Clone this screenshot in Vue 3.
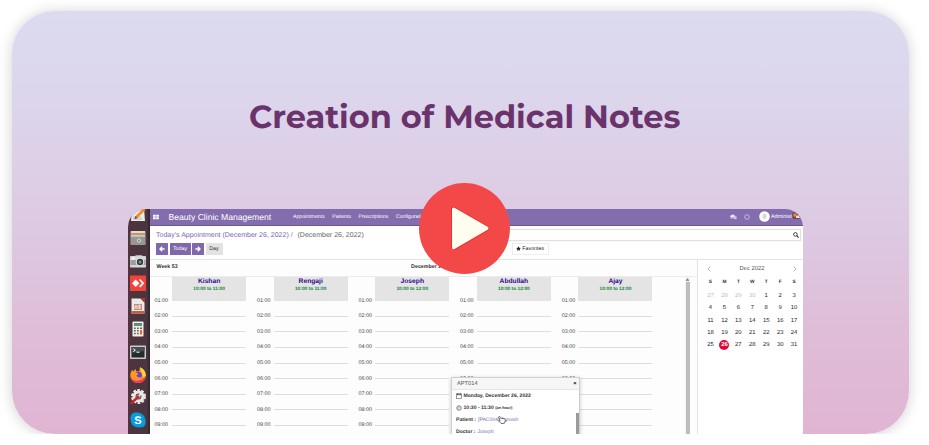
<script setup>
const menus = ['Appointments', 'Patients', 'Prescriptions', 'Configuration']
const doctors = [
  { name: 'Kishan', hours: '10:00 to 11:00' },
  { name: 'Rengaji', hours: '10:00 to 11:00' },
  { name: 'Joseph', hours: '10:00 to 12:00' },
  { name: 'Abdullah', hours: '10:00 to 12:00' },
  { name: 'Ajay', hours: '10:00 to 12:00' },
]
const slots = ['01:00', '02:00', '03:00', '04:00', '05:00', '06:00', '07:00', '08:00', '09:00']
const weekdays = ['S', 'M', 'T', 'W', 'T', 'F', 'S']
const days = [27, 28, 29, 30, ...Array.from({ length: 31 }, (_, i) => i + 1)].map((n, i) => ({
  n,
  muted: i < 4,
  today: i >= 4 && n === 26,
}))
// The appointment popup lies over the last two columns' labels from 07:00 on.
const labelShown = (column, slot) => column < 3 || slot < 6
</script>

<template>
  <main class="card">
    <h1 class="title">Creation of Medical Notes</h1>

    <section class="screen">
      <aside class="dock">
        <svg viewBox="0 0 16 16"><path d="M2 1h12l1 13H1z" fill="#ecebea" /><path d="M3 10h8M3 12h9" stroke="#bbb" /><path d="M13.5 1l2 2-8 8-3 1 1-3z" fill="#f08a2c" /><path d="M5.5 9l2 2-3 1z" fill="#554" /></svg>
        <svg viewBox="0 0 16 16"><rect x="0.5" y="1" width="15" height="14" rx="1" fill="#aaa9a5" /><rect x="1" y="1" width="14" height="2" fill="#dedbd5" /><rect x="1" y="3" width="14" height="1.500" fill="#d98d54" /><rect x="1" y="6" width="14" height="9" fill="#989792" /><path d="M1 6h14" stroke="#e6e6e1" /><circle cx="9" cy="10.500" r="2" fill="#d9d9d5" /><circle cx="9" cy="10.500" r="1" fill="#777" /></svg>
        <svg viewBox="0 0 16 16"><path d="M5 3l1-1h6l1 2z" fill="#aaa" /><rect x="0" y="3" width="16" height="11.500" rx="1" fill="#d5d7d5" /><rect x="0.3" y="7" width="15.4" height="5" fill="#9b9f9f" /><rect x="2" y="4.5" width="3" height="2" fill="#f8f8f8" /><circle cx="10" cy="9" r="4.3" fill="#e7e7e3" /><circle cx="10" cy="9" r="3.2" fill="#353b40" /><circle cx="10" cy="9" r="1.5" fill="#799098" /></svg>
        <svg viewBox="0 0 16 16"><rect x="0" y="0.5" width="16" height="15.5" rx="0.8" fill="#f44439" /><path d="M5.7 4.5L9.4 8.2l-3.7 3.7L2 8.2z" fill="#fff" /><path d="M9 5l1.2-1.1 4.1 4.3-4.1 4.2L9 11.3l3-3.1z" fill="#fff" /></svg>
        <svg viewBox="0 0 16 16"><path d="M1.5 0.5h9l4 4v11h-13z" fill="#eceae8" /><path d="M10 0h5v5z" fill="#a43f21" /><path d="M1.5 13h13v2.5h-13z" fill="#c65b3d" /><rect x="4" y="6" width="8" height="6" fill="#c78e78" /><path d="M5 11V8h2v3M9 11V7h1v4" stroke="#fff" stroke-width="0.8" fill="none" /></svg>
        <svg viewBox="0 0 16 16"><rect x="2.5" y="0.5" width="11" height="15" rx="0.8" fill="#eeeeea" /><rect x="4" y="2" width="8" height="3" fill="#569275" /><path d="M4 7.2h1.7M7 7.2h1.7M10 7.2h2M4 9.8h1.7M7 9.8h1.7M4 12.5h1.7M7 12.5h1.7" stroke="#5d6265" stroke-width="1.5" /><rect x="10" y="9" width="2" height="4.5" fill="#ed6524" /></svg>
        <svg viewBox="0 0 16 16"><rect x="0" y="1.5" width="16" height="13.5" rx="0.8" fill="#c9cac7" /><rect x="1.5" y="3" width="13" height="10.5" fill="#252b2d" /><path d="M1.5 3h13v4l-13 2z" fill="#454e50" /><path d="M3.3 4.8l2 1.4-2 1.4M6.5 8.2h3" stroke="#fff" stroke-width="1" fill="none" /></svg>
        <svg viewBox="0 0 16 16"><path d="M10 0.3C13.8 2 16 5 15.8 9c-.3 4-3.5 7-7.6 7S0.5 13 .3 8.7C.2 5.8 1.4 4 2.5 2.7l.6 1.7L5.7 2l.5 2.2 3 .2z" fill="#ff9926" /><path d="M.4 9C2 13 5 14 8.6 13.6 12 13.2 14.2 10.8 15.7 9c0 4-3.2 7-7.5 7S.8 12.8.4 9z" fill="#f1365e" /><path d="M10 0.3C13.8 2 16 5 15.7 9L13 10 11.6 5z" fill="#ffda35" /><circle cx="8.3" cy="8.5" r="3.7" fill="#703fc2" /><path d="M2.5 6c3-1 5 0 6 1l-2 1.3C7.2 11 10 11 11.6 9.4 11 13 5 14 3.5 9z" fill="#ff9926" /></svg>
        <svg viewBox="0 0 16 16"><circle cx="8.5" cy="7.5" r="6.3" fill="none" stroke="#e8e8e5" stroke-width="2.4" stroke-dasharray="2.6 1.36" /><circle cx="8.5" cy="7.5" r="4.5" fill="none" stroke="#e8e8e5" stroke-width="3.2" /><circle cx="8.5" cy="7.5" r="2.3" fill="#98928f" /><path d="M1.5 14.2L9 7" stroke="#c9252c" stroke-width="2.5" stroke-linecap="round" /><path d="M9 7.4l2.3-3.7" stroke="#f2f2f2" stroke-width="1.7" /></svg>
        <svg viewBox="0 0 16 16"><path d="M5 .6C10 0 15 2.5 15.3 8c1 4-1 8-5 7.3C5 16 .8 13 .8 8-.2 4 1.8 1 5 .6z" fill="#079ddd" /><text x="8" y="12" text-anchor="middle" class="skype">S</text></svg>
      </aside>

      <div class="app">
        <header class="topbar">
          <svg class="apps" viewBox="0 0 6 6"><path d="M0 .8h2.7v2H0zM3.2.8h2.7v2H3.2zM0 3.2h2.7v2H0zM3.2 3.2h2.7v2H3.2z" fill="#fff" /></svg>
          <span class="brand">Beauty Clinic Management</span>
          <nav class="menu"><span v-for="m in menus" :key="m">{{ m }}</span></nav>
          <div class="tray">
            <svg class="chat" viewBox="0 0 7 6"><ellipse cx="2.7" cy="2.3" rx="2.5" ry="1.8" fill="#e5def0" /><path d="M1 3.2L.5 5l2-1z" fill="#e5def0" /><path d="M5.4 2c2 .7 1.6 2.2.7 2.6l.4 1-1.6-.7c-1 .1-1.6-.1-2-.5 1.600 0 2.800-.8 2.500-2.400z" fill="#d9cfe8" /></svg>
            <svg class="clock" viewBox="0 0 6 6"><circle cx="3" cy="3" r="2.3" fill="none" stroke="#d5cbe4" stroke-width="0.8" /></svg>
            <svg class="avatar" viewBox="0 0 11 11"><circle cx="5.500" cy="5.500" r="5.300" fill="#fff" /><ellipse cx="5.500" cy="5.200" rx="2" ry="2.800" fill="#d9d9d9" /></svg>
            <span class="user">Administr</span>
            <svg class="badge" viewBox="0 0 9 7"><path d="M0 1l4-1 5 5-2 2H1z" fill="#79434a" /><path d="M1 2l3-1 1 3-3 1z" fill="#e2873f" /><path d="M4 4l3-1 1 3H4z" fill="#e6ddd6" /></svg>
          </div>
        </header>

        <div class="control">
          <div class="crumbs">
            <span class="crumb"><b>Today's Appointment (December 26, 2022)</b> /</span>
            <span class="current">(December 26, 2022)</span>
            <div class="search"><svg viewBox="0 0 6 6"><circle cx="2.400" cy="2.400" r="1.800" fill="none" stroke="#333" stroke-width="0.900" /><path d="M3.700 3.700l1.900 1.900" stroke="#333" stroke-width="1.100" /></svg></div>
          </div>
          <div class="actions">
            <span class="btn arrow"><svg viewBox="0 0 6 6"><path d="M5.600 3H1M3.200.8L1 3l2.200 2.200" fill="none" stroke="#fff" stroke-width="1.300" /></svg></span>
            <span class="btn today-btn">Today</span>
            <span class="btn arrow"><svg viewBox="0 0 6 6"><path d="M.4 3H5M2.800.8L5 3 2.800 5.200" fill="none" stroke="#fff" stroke-width="1.300" /></svg></span>
            <span class="btn day">Day</span>
            <span class="favorites"><svg viewBox="0 0 10 10"><path d="M5 .3l1.500 3 3.300.5-2.400 2.300.6 3.300-3-1.600-3 1.600.6-3.300L.2 3.800l3.300-.5z" fill="#222" /></svg>Favorites</span>
          </div>
        </div>

        <div class="body">
          <div class="planner">
            <div class="weekbar"><span>Week 53</span><span class="date">December 26, 2022</span></div>
            <div class="columns">
              <div v-for="(d, c) in doctors" :key="d.name" class="column">
                <div class="doctor"><strong>{{ d.name }}</strong><small>{{ d.hours }}</small></div>
                <div class="slots">
                  <div v-for="(s, i) in slots" :key="s" class="slot"><span><template v-if="labelShown(c, i)">{{ s }}</template></span><i :class="{ none: i === 0 }"></i></div>
                </div>
              </div>
              <div class="scroll"><svg viewBox="0 0 4 4"><path d="M2 1l1.500 2h-3z" fill="#777" /></svg><div></div></div>
            </div>
          </div>
          <div class="calendar">
            <div class="month">
              <svg viewBox="0 0 4 6"><path d="M3.300.7L1 3l2.300 2.300" fill="none" stroke="#999" stroke-width="0.700" /></svg>
              <span>Dec 2022</span>
              <svg viewBox="0 0 4 6"><path d="M.7.7L3 3 .7 5.300" fill="none" stroke="#999" stroke-width="0.700" /></svg>
            </div>
            <div class="grid names"><b v-for="(w, i) in weekdays" :key="i">{{ w }}</b></div>
            <div class="grid dates"><span v-for="(d, i) in days" :key="i" :class="{ muted: d.muted, today: d.today }">{{ d.n }}</span></div>
          </div>
        </div>
      </div>

      <div class="popup">
        <div class="popup-head"><span>APT014</span><b>×</b></div>
        <div class="popup-body">
          <div class="line"><svg viewBox="0 0 6 6"><rect x="0.600" y="0.900" width="4.800" height="4.600" fill="none" stroke="#555" stroke-width="0.600" /><path d="M.6 1.700h4.800M1.700 0v1.500M4.300 0v1.500" stroke="#444" stroke-width="0.800" /></svg><b>Monday, December 26, 2022</b></div>
          <div class="line"><svg viewBox="0 0 6 6"><circle cx="3" cy="3" r="2.200" fill="none" stroke="#555" stroke-width="0.800" /><path d="M3 1.800v1.400H2" fill="none" stroke="#555" stroke-width="0.500" /></svg><b>10:30 - 11:30 <small>(an hour)</small></b></div>
          <div class="line"><b>Patient :</b><em>[PAC004] Jignesh</em></div>
          <div class="line"><b>Doctor :</b><em>Joseph</em></div>
        </div>
        <div class="popup-scroll"></div>
        <svg class="hand" viewBox="0 0 8 8"><path d="M1 .5c.8-.4 1.200.3 1.600 1.700l3.800.6c1 .2 1 1 .7 2.600L6.300 7.400H3L.8 4.900c0-.8.8-.7 1.300-.3L.8 1.600C.6 1 .7.7 1 .5z" fill="#fff" stroke="#333" stroke-width="0.700" /></svg>
      </div>
    </section>

    <svg class="play" viewBox="0 0 91 91">
      <circle cx="45.500" cy="45.500" r="45.500" fill="#f34848" />
      <path d="M34.700 26.200L67.800 45.300 34.700 64.600z" fill="#fffdf0" stroke="#e92a2a" stroke-width="5" stroke-linejoin="round" />
      <path d="M34.700 26.200L67.800 45.300 34.700 64.600z" fill="#fffdf0" stroke="#fffdf0" stroke-width="3.400" stroke-linejoin="round" />
    </svg>
  </main>
</template>

<style>
body { margin: 0; background: #fff; }
</style>

<style scoped>
* { box-sizing: border-box; }
.card {
  position: relative;
  width: 897px;
  height: 423px;
  margin: 11px 0 0 12px;
  border-radius: 43px;
  background: linear-gradient(180deg, #dcdbf0 0%, #dcd5eb 22%, #ddcbe3 48%, #dfbdd9 75%, #e0b5d3 100%);
  box-shadow: 0 1px 14px rgba(0, 0, 0, 0.19);
  display: flex;
  flex-direction: column;
  font-family: "Liberation Sans", Arial, sans-serif;
  text-rendering: geometricPrecision;
  white-space: nowrap;
}
svg { display: block; flex: none; }
.title {
  margin: 86px 0 0 237px;
  height: 42px;
  color: #6b336b;
  font: 700 32px/42px Montserrat, Inter, sans-serif;
}
.screen {
  position: relative;
  display: flex;
  width: 675px;
  height: 225px;
  margin: 70px 0 0 116px;
  border-radius: 18px 18px 0 0;
  overflow: hidden;
  background: #fff;
}
.dock {
  width: 22px;
  flex: none;
  background: linear-gradient(90deg, #50333f, #493640 85%, #32232d);
  display: flex;
  flex-direction: column;
  gap: 6.800px;
  padding-left: 1.500px;
}
.dock svg { width: 16px; height: 16px; }
.dock svg:first-child { margin-top: -2px; }
.skype { font: 700 11px "Liberation Sans", sans-serif; fill: #fff; }
.app { flex: 1; display: flex; flex-direction: column; min-width: 0; }
.topbar {
  height: 16.500px;
  flex: none;
  display: flex;
  align-items: center;
  padding-left: 3px;
  background: #836dae;
  border-bottom: 1px solid #6c5897;
  color: #fff;
}
.apps { width: 6px; height: 6px; }
.brand { font-size: 8.600px; margin-left: 9.500px; width: 124.500px; }
.menu { display: flex; gap: 7.500px; font-size: 5.200px; width: 437px; color: #fff; }
.tray { display: flex; align-items: center; font-size: 5.400px; }
.chat { width: 7px; height: 6px; }
.clock { width: 6px; height: 6px; margin-left: 7px; }
.avatar { width: 11px; height: 11px; margin-left: 9px; }
.user { margin-left: 1px; width: 21px; overflow: hidden; }
.badge { width: 9px; height: 7px; margin-top: -2px; }
.control { height: 34px; flex: none; border-bottom: 1px solid #e4e4e4; padding: 3px 0 0 6px; }
.crumbs { display: flex; align-items: center; height: 13px; font-size: 7.020px; color: #666; }
.crumb { width: 141.500px; color: #7c7bad; }
.crumb b { font-weight: 400; color: #8065ad; }
.current { width: 130px; }
.search {
  flex: 1;
  height: 12px;
  margin-right: 2.500px;
  border: 1px solid #e1e1e1;
  box-shadow: 0 0 1px #ddd;
  display: flex;
  justify-content: flex-end;
  align-items: center;
  padding-right: 1px;
}
.search svg { width: 6px; height: 6px; }
.actions { display: flex; align-items: center; gap: 1.500px; height: 12px; margin-top: 1px; font-size: 5.300px; }
.btn { height: 12px; display: flex; align-items: center; justify-content: center; background: #8068ad; color: #fff; border-radius: 0.500px; }
.arrow { width: 12px; }
.arrow svg { width: 6px; height: 6px; }
.today-btn { width: 21px; }
.day { width: 17px; background: #e3e3e3; color: #333; }
.favorites {
  width: 37px;
  height: 12px;
  margin-left: 287.500px;
  display: flex;
  align-items: center;
  justify-content: center;
  gap: 1.500px;
  border: 1px solid #eee;
  color: #222;
  font-size: 5.300px;
}
.favorites svg { width: 5px; height: 5px; }
.body { flex: 1; display: flex; min-height: 0; }
.planner { width: 547px; flex: none; background: #fdfdfe; }
.weekbar { height: 17.500px; display: flex; align-items: center; padding: 0 0 1.500px 6.500px; font-size: 5.300px; font-weight: 700; color: #333; border-bottom: 1px solid #ececec; }
.date { margin-left: 233.500px; }
.columns { display: flex; padding-left: 4.500px; }
.column { width: 101.600px; flex: none; }
.doctor {
  width: 74px;
  height: 23.500px;
  margin-left: 17.600px;
  background: #e4e4e4;
  display: flex;
  flex-direction: column;
  align-items: center;
}
.doctor strong { font-size: 6.700px; line-height: 10px; color: #30088f; }
.doctor small { font-size: 4.800px; line-height: 6.500px; font-weight: 700; color: #118434; }
.slots { margin-top: -7.700px; }
.slot { height: 15.620px; display: flex; align-items: center; font-size: 5.400px; color: #444; }
.slot span { width: 17.600px; }
.column:not(:first-child) .slot span { padding-left: 0.800px; }
.slot i { width: 74px; height: 1px; background: #dedee0; }
.slot i.none { background: transparent; }
.scroll { width: 5px; height: 158px; margin-left: 23px; background: #f3f3f3; }
.scroll svg { width: 5px; height: 5px; }
.scroll div { width: 4px; height: 152px; margin-left: 0.500px; background: #bdbdbd; }
.calendar { flex: 1; border-left: 1px solid #e5e5e5; background: #fff; padding-top: 4px; }
.month { display: flex; align-items: center; justify-content: space-between; height: 10px; padding: 0 6px 0 9px; font-size: 5.800px; color: #555; }
.month svg { width: 4px; height: 6px; }
.grid { display: grid; grid-template-columns: repeat(7, 13.950px); margin-left: 5.500px; justify-items: center; align-items: center; color: #222; }
.names { height: 16.400px; padding-top: 1px; font-size: 4.800px; color: #333; }
.dates { grid-auto-rows: 12.300px; font-size: 5.900px; }
.dates .muted { color: #bbb; }
.dates .today { width: 10px; height: 10px; border-radius: 50%; background: #e40639; color: #fff; text-align: center; line-height: 10px; font-weight: 700; }
.popup { position: absolute; left: 322.500px; top: 168px; width: 129px; height: 70px; background: #fff; border: 1px solid #cfcfcf; box-shadow: 0 1px 4px rgba(0, 0, 0, 0.22); }
.popup-head { height: 12px; display: flex; align-items: center; justify-content: space-between; padding: 1px 2px 0 5.500px; font-size: 5.700px; color: #555; background: #f6f6f6; border-bottom: 1px solid #e6e6e6; }
.popup-head b { color: #111; }
.popup-body { padding-left: 4.500px; font-size: 5.080px; color: #333; }
.line { height: 12px; display: flex; align-items: center; }
.line svg { width: 6px; height: 6px; margin-right: 1.500px; }
.line small { font-size: 4px; }
.line em { font-style: normal; color: #7771b0; margin-left: 2px; }
.popup-scroll { position: absolute; right: 0; top: 35px; width: 2.500px; height: 30px; background: #9a9a9f; }
.hand { position: absolute; left: 46px; top: 37.500px; width: 8px; height: 8px; }
.play { position: absolute; left: 407px; top: 172px; width: 91px; height: 91px; }
</style>
